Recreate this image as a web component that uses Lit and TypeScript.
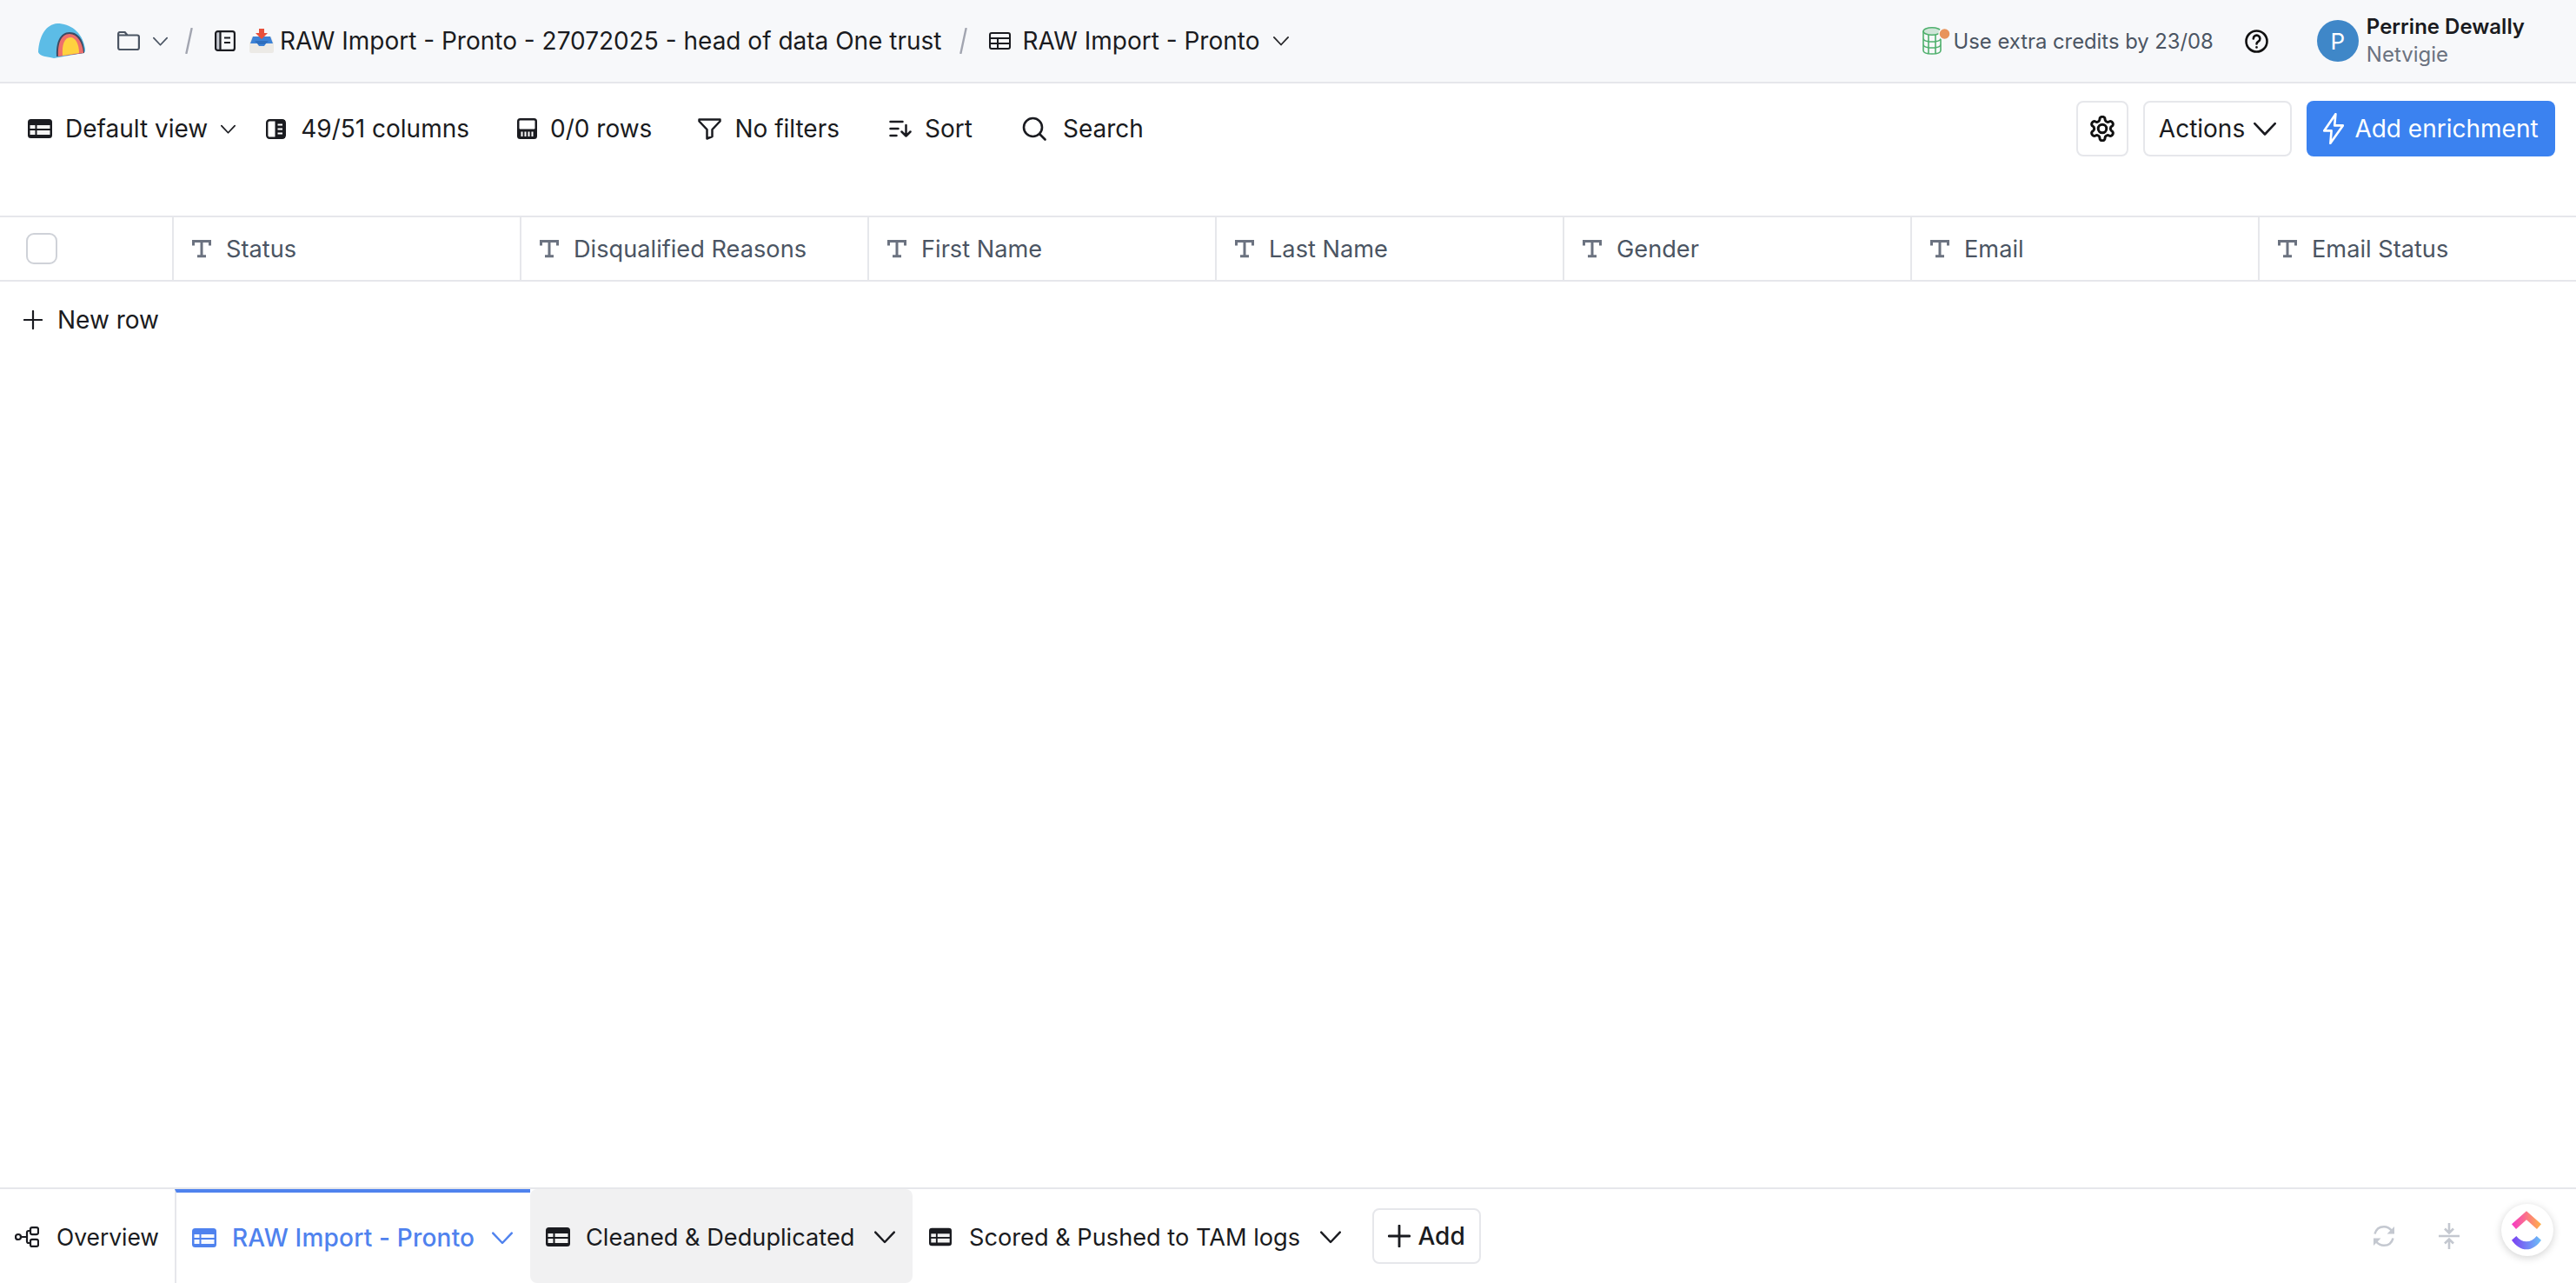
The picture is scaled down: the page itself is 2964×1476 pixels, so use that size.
import { LitElement, html, css, svg } from "lit";
import { customElement } from "lit/decorators.js";

const chevron = (w: number, cls = "") => html`<svg class=${cls} width=${w} height=${w} viewBox="2 2 20 20" fill="none" stroke="currentColor" stroke-width="2" stroke-linecap="round" stroke-linejoin="round"><path d="M3 7.500 12 17l9-9.500"/></svg>`;

const plus = (s: number, sw: number) => html`<svg width=${s} height=${s} viewBox="0 0 24 24" fill="none" stroke="currentColor" stroke-width=${sw} stroke-linecap="round"><path d="M12 1v22M1 12h22"/></svg>`;

// solid-ish table icon used in the view toolbar and the tabs
const tableSolid = (w: number, h: number) => html`<svg width=${w} height=${h} viewBox="0 0 28 22">
  <rect width="28" height="22" rx="3.500" fill="currentColor"/>
  <rect x="2.500" y="7" width="6" height="4" fill="#fff" fill-opacity=".95"/>
  <rect x="10.500" y="7" width="15" height="4" fill="#fff" fill-opacity=".95"/>
  <rect x="2.500" y="13" width="6" height="5" fill="#fff" fill-opacity=".95"/>
  <rect x="10.500" y="13" width="15" height="5" fill="#fff" fill-opacity=".95"/>
</svg>`;

const T = html`<svg width="22" height="22" viewBox="0 0 22 22" fill="none" stroke="#6b7280" stroke-width="3"><path d="M1.500 7.500V2.500h19V7.500M11 2.500v17.300M6 19.800h10"/></svg>`;

const columns = ["Status", "Disqualified Reasons", "First Name", "Last Name", "Gender", "Email", "Email Status"];

@customElement("app-root")
export class AppRoot extends LitElement {
  static styles = css`
    :host {
      display: flex;
      flex-direction: column;
      height: 100vh;
      overflow: hidden;
      background: #fff;
      color: #1a1b20;
      font-family: Inter, "Liberation Sans", sans-serif;
      font-size: 28px;
    }
    svg { flex: none; display: block; }

    .top {
      flex: none;
      height: 94px;
      display: flex;
      align-items: center;
      padding-left: 44px;
      background: #f7f8fa;
      border-bottom: 2px solid #e6e7eb;
      box-sizing: content-box;
    }
    .crumb-folder { margin-left: 37px; color: #4b5563; }
    .crumb-chev { margin-left: 15px; color: #4b5563; }
    .slash { margin-left: 20px; color: #a2a5b0; }
    .crumb-book { margin-left: 25px; }
    .crumb-inbox { margin-left: 16px; }
    .crumb-title { margin-left: 7px; white-space: nowrap; }
    .slash2 { margin-left: 20px; color: #a2a5b0; }
    .crumb-table { margin-left: 25px; }
    .crumb-sheet { margin-left: 14px; white-space: nowrap; }
    .crumb-chev2 { margin-left: 16px; color: #27272a; }

    .credits {
      margin-left: auto;
      display: flex;
      align-items: center;
      color: #4b5563;
      font-size: 23.8px;
      white-space: nowrap;
    }
    .credits span { margin-left: 4px; }
    .help { margin-left: 36px; }
    .user {
      margin-left: 56px;
      margin-right: 59px;
      display: flex;
      align-items: center;
      gap: 9px;
    }
    .avatar {
      width: 48px;
      height: 48px;
      border-radius: 50%;
      background: #3f87c8;
      color: #fff;
      font-size: 26px;
      display: flex;
      align-items: center;
      justify-content: center;
    }
    .user-text { display: flex; flex-direction: column; gap: 2px; white-space: nowrap; }
    .user-name { font-size: 24px; line-height: 30px; font-weight: 600; }
    .user-org { font-size: 24px; line-height: 30px; color: #6b7280; }

    .toolbar {
      flex: none;
      height: 152px;
      box-sizing: border-box;
      padding: 20px 24px 0 32px;
      display: flex;
      align-items: flex-start;
    }
    .tools { display: flex; align-items: center; height: 64px; gap: 55px; }
    .tool { display: flex; align-items: center; gap: 15px; white-space: nowrap; }
    .view { margin-right: -20px; }
    .wide { gap: 17px; }
    .pull { margin-left: -2px; }
    .nudge { margin-left: 2px; }
    .search-tool { gap: 19px; }
    .actions { margin-left: auto; display: flex; gap: 17px; height: 64px; }
    .btn {
      box-sizing: border-box;
      height: 64px;
      display: flex;
      align-items: center;
      justify-content: center;
      border: 2px solid #e6e7eb;
      border-radius: 8px;
      background: #fff;
      white-space: nowrap;
    }
    .gear { width: 60px; }
    .act { width: 171px; gap: 10px; }
    .enrich {
      width: 286px;
      gap: 12px;
      border: none;
      background: #3b82f0;
      color: #fff;
    }

    .thead {
      flex: none;
      height: 76px;
      box-sizing: border-box;
      display: grid;
      grid-template-columns: 198px repeat(7, 400px);
      border-top: 2px solid #e6e7eb;
      border-bottom: 2px solid #e6e7eb;
      overflow: hidden;
      color: #4b5563;
      font-size: 27.2px;
    }
    .check-cell { display: flex; align-items: center; padding-left: 30px; }
    .check {
      width: 36px;
      height: 36px;
      box-sizing: border-box;
      border: 2px solid #cfd2d8;
      border-radius: 9px;
      background: #fff;
    }
    .th {
      display: flex;
      align-items: center;
      gap: 17px;
      padding-left: 21px;
      border-left: 2px solid #e6e7eb;
      white-space: nowrap;
    }
    .new-row {
      flex: none;
      height: 88px;
      padding-left: 27px;
      display: flex;
      align-items: center;
      gap: 17px;
    }
    .spacer { flex: 1; }

    .bottom {
      flex: none;
      height: 110px;
      box-sizing: border-box;
      border-top: 2px solid #e6e7eb;
      display: flex;
      align-items: stretch;
      font-size: 27.2px;
    }
    .tab {
      display: flex;
      align-items: center;
      white-space: nowrap;
      box-sizing: border-box;
      padding-top: 2px;
    }
    .overview { width: 201px; padding-left: 17px; gap: 20px; font-size: 26.4px; }
    .active {
      width: 409px;
      padding: 0 0 0 18px;
      gap: 18px;
      color: #4f82ee;
      font-size: 28px;
      font-weight: 500;
      letter-spacing: 0.2px;
      border-left: 2px solid #e6e7eb;
      border-top: 4px solid #4f82ee;
    }
    .active svg:last-child { margin-left: 2px; }
    .cleaned {
      width: 440px;
      padding-left: 18px;
      gap: 18px;
      background: #f1f1f2;
      border-radius: 8px;
    }
    .cleaned svg:last-child { margin-left: 5px; }
    .scored { padding-left: 19px; gap: 20px; }
    .scored svg:last-child { margin-left: 3px; }
    .add {
      align-self: flex-start;
      margin: 22px 0 0 36px;
      width: 125px;
      height: 64px;
      gap: 8px;
      font-size: 28px;
      font-weight: 500;
    }
    .end {
      margin-left: auto;
      margin-right: 26px;
      display: flex;
      align-items: center;
      align-self: flex-start;
      height: 108px;
    }
    .sync { margin-right: 50px; }
    .squeeze { margin-right: 48px; }
    .cu {
      width: 60px;
      height: 60px;
      margin-top: -14px;
      border-radius: 50%;
      background: #fff;
      box-shadow: 0 2px 10px rgba(0, 0, 0, 0.18);
    }
  `;

  private logo() {
    return html`<svg width="54" height="40" viewBox="0 0 54 40">
      <path d="M0 33C1 14 9 1 22 0c14 0 29 9 32 29 .5 3 0 4-2 5l-34 6C10 38 2 38 0 33z" fill="#5cbce6"/>
      <path d="M21 38C20 22 25 10 36 10c11 0 17 11 17 24z" fill="#3c4a63"/>
      <path d="M23 38C22 24 26 12 36 12c9 0 15 10 16 22z" fill="#ee6f6c"/>
      <path d="M28 37C27 25 30 16 37 16c6 0 10 8 10 18z" fill="#ffd23f"/>
    </svg>`;
  }

  private inbox() {
    return html`<svg class="crumb-inbox" width="28" height="28" viewBox="0 0 28 28">
      <path d="M0 17 3 9h22l3 8v9a2 2 0 0 1-2 2H2a2 2 0 0 1-2-2z" fill="#eceae6"/>
      <path d="M4 9h20l3 8h-8l-2 3h-6l-2-3H1z" fill="#3d82d6"/>
      <path d="M6 14h16l-4 4H10z" fill="#2560ae" fill-opacity=".6"/>
      <path d="M11 0h6v5h4l-7 7-7-7h4z" fill="#e8503c"/>
    </svg>`;
  }

  private cols() {
    return columns.map((c) => html`<div class="th">${T}<span>${c}</span></div>`);
  }

  render() {
    return html`
      <div class="top">
        ${this.logo()}
        <svg class="crumb-folder" width="26" height="22" viewBox="0 0 26 22" fill="none" stroke="currentColor" stroke-width="2.200" stroke-linejoin="round"><path d="M1.100 3a2 2 0 0 1 2-2h5.500l3 3.500h11.300a2 2 0 0 1 2 2V19a2 2 0 0 1-2 2h-19.800a2 2 0 0 1-2-2zM1.100 4.500h10.500"/></svg>
        ${chevron(17, "crumb-chev")}
        <svg class="slash" width="9" height="30" viewBox="0 0 9 30"><path d="M7.500 1 1.500 29" stroke="currentColor" stroke-width="2.400" stroke-linecap="round"/></svg>
        <svg class="crumb-book" width="24" height="24" viewBox="0 0 24 24" fill="none" stroke="#1a1b20" stroke-width="2.200"><rect x="1.500" y="2" width="5" height="20" fill="#c9ccd4" stroke="none"/><rect x="1.100" y="1.100" width="21.800" height="21.800" rx="2.500"/><path d="M6.500 1v22"/><path d="M11 8.500h7M11 14h7"/></svg>
        ${this.inbox()}
        <span class="crumb-title">RAW Import - Pronto - 27072025 - head of data One trust</span>
        <svg class="slash2" width="9" height="30" viewBox="0 0 9 30"><path d="M7.500 1 1.500 29" stroke="currentColor" stroke-width="2.400" stroke-linecap="round"/></svg>
        <svg class="crumb-table" width="25" height="20" viewBox="0 0 25 20" fill="none" stroke="#1a1b20" stroke-width="2"><rect x="1" y="1" width="23" height="18" rx="2"/><path d="M1 7h23M1 13h23M10 7v12"/></svg>
        <span class="crumb-sheet">RAW Import - Pronto</span>
        ${chevron(18, "crumb-chev2")}
        <div class="credits">
          <svg width="32" height="32" viewBox="0 0 32 32" fill="none" stroke="#4fb06d" stroke-width="1.600">
            <ellipse cx="11" cy="5" rx="10" ry="4.200" fill="#cfe5d8"/>
            <path d="M1 5v22c0 2.500 4.500 4 10 4s10-1.500 10-4V5M1 13c0 2.500 4.500 4 10 4s10-1.500 10-4M1 20c0 2.500 4.500 4 10 4s10-1.500 10-4M7 9v22M15 9v22"/>
            <circle cx="25.500" cy="8" r="6.500" fill="#e8935a" stroke="#f7f8fa" stroke-width="1.500"/>
          </svg>
          <span>Use extra credits by 23/08</span>
        </div>
        <svg class="help" width="27" height="27" viewBox="0 0 27 27" fill="none" stroke="#111" stroke-width="2.600" stroke-linecap="round"><circle cx="13.500" cy="13.500" r="12"/><path d="M9.800 10.500a3.800 3.800 0 1 1 5.800 3.200c-1.300.8-2.100 1.500-2.100 2.800"/><path d="M13.500 20.300v.1"/></svg>
        <div class="user">
          <div class="avatar">P</div>
          <div class="user-text">
            <span class="user-name">Perrine Dewally</span>
            <span class="user-org">Netvigie</span>
          </div>
        </div>
      </div>

      <div class="toolbar">
        <div class="tools">
          <div class="tool view">${tableSolid(28, 22)}<span>Default view</span>${chevron(17)}</div>
          <div class="tool wide">
            <svg width="23" height="23" viewBox="0 0 23 23"><rect x="1.200" y="1.200" width="20.600" height="20.600" rx="3" fill="#fff" stroke="currentColor" stroke-width="2.400"/><rect x="10.500" y="1" width="11.500" height="21" fill="currentColor"/><path d="M13.500 6.500h5.500M13.500 11.500h5.500M13.500 16.500h5.500" stroke="#fff" stroke-width="2"/></svg>
            <span>49/51 columns</span>
          </div>
          <div class="tool">
            <svg width="23" height="24" viewBox="0 0 23 24"><rect width="23" height="24" rx="3.500" fill="currentColor"/><rect x="2.500" y="2.500" width="18" height="10" rx="1" fill="#fff"/><path d="M5.500 15.500v5.500M9.500 15.500v5.500M13.500 15.500v5.500M17.500 15.500v5.500" stroke="#fff" stroke-width="2"/></svg>
            <span>0/0 rows</span>
          </div>
          <div class="tool pull">
            <svg width="27" height="25" viewBox="0 0 27 25" fill="none" stroke="currentColor" stroke-width="2.500" stroke-linejoin="round"><path d="M1.500 1.500h24v2L16.500 13V21l-6 2.500V13L1.500 3.500z"/></svg>
            <span>No filters</span>
          </div>
          <div class="tool nudge">
            <svg width="26" height="20" viewBox="0 0 26 20" fill="none" stroke="currentColor" stroke-width="2.500" stroke-linecap="round" stroke-linejoin="round"><path d="M1.500 2h14M1.500 10h9M1.500 18h7M19.500 6v12.500M14.500 13.500l5 5 5-5"/></svg>
            <span>Sort</span>
          </div>
          <div class="tool nudge search-tool">
            <svg width="28" height="28" viewBox="0 0 28 28" fill="none" stroke="currentColor" stroke-width="2.600" stroke-linecap="round"><circle cx="12.500" cy="12.500" r="10.500"/><path d="M20.500 20.500 26.500 26.500"/></svg>
            <span>Search</span>
          </div>
        </div>
        <div class="actions">
          <div class="btn gear">
            <svg width="30" height="30" viewBox="1 1 22 22" fill="none" stroke="#111" stroke-width="2.200" stroke-linecap="round" stroke-linejoin="round"><path d="M12.220 2h-.44a2 2 0 0 0-2 2v.18a2 2 0 0 1-1 1.730l-.43.250a2 2 0 0 1-2 0l-.150-.080a2 2 0 0 0-2.730.730l-.220.380a2 2 0 0 0 .730 2.730l.150.100a2 2 0 0 1 1 1.720v.510a2 2 0 0 1-1 1.740l-.150.090a2 2 0 0 0-.730 2.730l.220.380a2 2 0 0 0 2.730.730l.150-.080a2 2 0 0 1 2 0l.430.250a2 2 0 0 1 1 1.730V20a2 2 0 0 0 2 2h.44a2 2 0 0 0 2-2v-.18a2 2 0 0 1 1-1.730l.430-.250a2 2 0 0 1 2 0l.150.080a2 2 0 0 0 2.730-.730l.220-.390a2 2 0 0 0-.730-2.730l-.150-.080a2 2 0 0 1-1-1.740v-.5a2 2 0 0 1 1-1.740l.150-.090a2 2 0 0 0 .730-2.730l-.220-.380a2 2 0 0 0-2.730-.730l-.150.080a2 2 0 0 1-2 0l-.430-.250a2 2 0 0 1-1-1.730V4a2 2 0 0 0-2-2z"/><circle cx="12" cy="12" r="3.500"/></svg>
          </div>
          <div class="btn act"><span>Actions</span>${chevron(26)}</div>
          <div class="btn enrich">
            <svg width="24" height="36" viewBox="1 1 20 30" fill="none" stroke="#fff" stroke-width="2.200" stroke-linejoin="round"><path d="M13 2 2 18h7l-1 12 12-17h-8z"/></svg>
            <span>Add enrichment</span>
          </div>
        </div>
      </div>

      <div class="thead">
        <div class="check-cell"><div class="check"></div></div>
        ${this.cols()}
      </div>
      <div class="new-row">${plus(22, 2.400)}<span>New row</span></div>
      <div class="spacer"></div>

      <div class="bottom">
        <div class="tab overview">
          <svg width="28" height="24" viewBox="0 0 28 24" fill="none" stroke="currentColor" stroke-width="2.200"><circle cx="4" cy="12" r="3"/><rect x="18" y="1.100" width="9" height="8" rx="2"/><rect x="18" y="14.900" width="9" height="8" rx="2"/><path d="M7 12h7M18 5h-2a2 2 0 0 0-2 2v10a2 2 0 0 0 2 2h2"/></svg>
          <span>Overview</span>
        </div>
        <div class="tab active">
          ${tableSolid(28, 22)}
          <span>RAW Import - Pronto</span>
          ${chevron(24)}
        </div>
        <div class="tab cleaned">
          ${tableSolid(28, 22)}
          <span>Cleaned &amp; Deduplicated</span>
          ${chevron(24)}
        </div>
        <div class="tab scored">
          ${tableSolid(26, 22)}
          <span>Scored &amp; Pushed to TAM logs</span>
          ${chevron(24)}
        </div>
        <div class="btn add">${plus(26, 2.600)}<span>Add</span></div>
        <div class="end">
          <svg class="sync" width="26" height="26" viewBox="0 0 26 26" fill="none" stroke="#c4c8d0" stroke-width="2.600" stroke-linejoin="round"><path d="M2.500 10.500C4 5 8 2.200 13 2.200c3.500 0 6.500 1.500 8.700 4.300M23.500 15.500C22 21 18 23.800 13 23.800c-3.500 0-6.500-1.500-8.700-4.300"/><path d="M25 2v8.500h-8.500zM1 24v-8.500h8.500z" fill="#c4c8d0" stroke="none"/></svg>
          <svg class="squeeze" width="24" height="30" viewBox="0 0 24 30" fill="none" stroke="#c4c8d0" stroke-width="2.600"><path d="M0 15h24M12 0v11M7 6.500l5 5 5-5M12 30V19M7 23.500l5-5 5 5"/></svg>
          <svg class="cu" viewBox="654 113 180 180">
            <defs>
              <linearGradient id="cua" x1="0" y1="0" x2="1" y2="0"><stop offset="0" stop-color="#f637c8"/><stop offset="1" stop-color="#ffb347"/></linearGradient>
              <linearGradient id="cub" x1="0" y1="0" x2="1" y2="0"><stop offset="0" stop-color="#7b3ff2"/><stop offset="1" stop-color="#6cc0f7"/></linearGradient>
            </defs>
            ${svg`<path d="M741 138 792 183 777 200 741 168 705 200 690 183z" fill="url(#cua)"/>`}
            ${svg`<path d="M690 238 706 224C716 236 728 243 741 243S766 236 776 224L792 238C778 258 760 270 741 270S704 258 690 238z" fill="url(#cub)"/>`}
          </svg>
        </div>
      </div>
    `;
  }
}
